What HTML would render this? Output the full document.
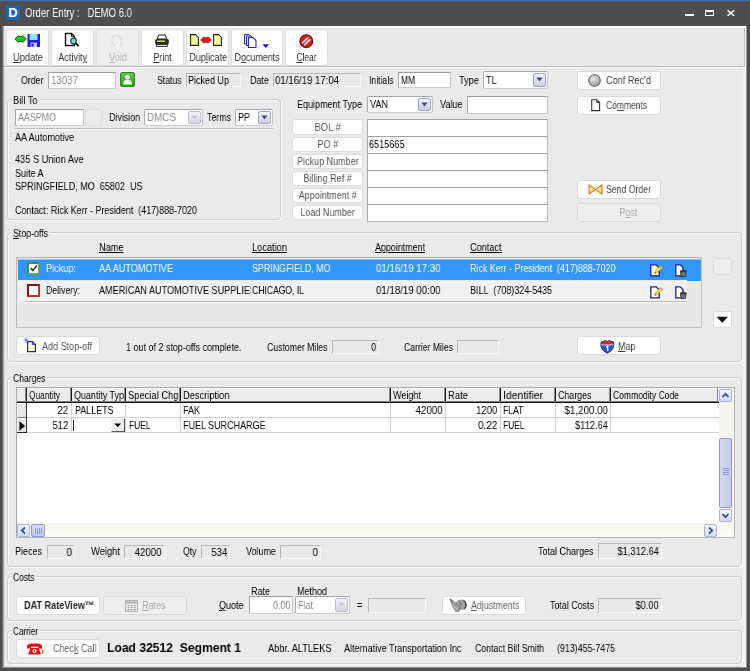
<!DOCTYPE html>
<html><head><meta charset="utf-8"><title>Order Entry : DEMO 6.0</title>
<style>
*{box-sizing:border-box;margin:0;padding:0}
html,body{width:750px;height:671px;overflow:hidden;background:#4e4e4e}
body{font-family:"Liberation Sans",sans-serif;font-size:11px;color:#000;position:relative}
.a{position:absolute}
.t{position:absolute;white-space:pre;line-height:14px;height:14px;will-change:transform}
u{text-decoration:underline;text-underline-offset:1px;text-decoration-thickness:1px}
</style></head><body>
<div class="a" style="left:0px;top:0px;width:750px;height:1px;background:#3d6cb3"></div>
<div class="a" style="left:0px;top:1px;width:750px;height:1px;background:#4a5568"></div>
<div class="a" style="left:6px;top:6px;width:14px;height:14px;background:#1a66b8;color:#fff;font-weight:bold;font-size:13px;line-height:14px;text-align:center">D</div>
<span class="t" style="top:5.8px;left:25px;transform:scaleX(0.794);transform-origin:0 0;color:#fff;font-size:12px;">Order Entry :&nbsp;&nbsp; DEMO 6.0</span>
<div class="a" style="left:685px;top:14px;width:9px;height:2px;background:#fff"></div>
<div class="a" style="left:705px;top:10px;width:9px;height:6px;border:1px solid #fff;border-top-width:2px"></div>
<svg class="a" style="left:727px;top:10px" width="8" height="6" viewBox="0 0 8 6"><path d="M0.6 0.3L7.2 5.9M7.2 0.3L0.6 5.9" stroke="#fff" stroke-width="1.5"/></svg>
<div class="a" style="left:2px;top:26px;width:744px;height:641px;background:#ebeaeb"></div>
<div class="a" style="left:743px;top:68px;width:3px;height:599px;background:#f1f1f1"></div>
<div class="a" style="left:746px;top:26px;width:1px;height:642px;background:#9c9c9c"></div>
<div class="a" style="left:2px;top:26px;width:1px;height:642px;background:#6e6e6e"></div>
<div class="a" style="left:3px;top:26px;width:1px;height:642px;background:#a9a9a9"></div>
<div class="a" style="left:4px;top:26px;width:1px;height:642px;background:#dcdcdc"></div>
<div class="a" style="left:4px;top:26px;width:742px;height:2px;background:#fafafa"></div>
<div class="a" style="left:4px;top:28px;width:741px;height:39px;background:#e9e9e9;border-bottom:1px solid #b9b9b9;border-right:1px solid #c0c0c0"></div>
<div class="a" style="left:4px;top:67px;width:742px;height:1px;background:#fbfbfb"></div>
<div class="a" style="left:745px;top:26px;width:1px;height:42px;background:#f6f6f6"></div>
<div class="a" style="left:6px;top:29px;width:43px;height:37px;background:#fefefe;border:1px solid #dedede;border-radius:3px"></div>
<span class="t" style="top:49.5px;left:9.76px;width:35.98px;text-align:center;transform:scaleX(0.845);transform-origin:50% 0;color:#333;"><u>U</u>pdate</span>
<div class="a" style="left:51px;top:29px;width:43px;height:37px;background:#fefefe;border:1px solid #dedede;border-radius:3px"></div>
<span class="t" style="top:49.5px;left:55.08px;width:35.34px;text-align:center;transform:scaleX(0.832);transform-origin:50% 0;color:#333;">Activit<u>y</u></span>
<div class="a" style="left:96px;top:29px;width:43px;height:37px;background:#eeeeee;border:1px solid #e0e0e0;border-radius:3px"></div>
<span class="t" style="top:49.5px;left:106.79px;width:21.92px;text-align:center;transform:scaleX(0.84);transform-origin:50% 0;color:#b4b4b4;"><u>V</u>oid</span>
<div class="a" style="left:141px;top:29px;width:43px;height:37px;background:#fefefe;border:1px solid #dedede;border-radius:3px"></div>
<span class="t" style="top:49.5px;left:151.19px;width:23.12px;text-align:center;transform:scaleX(0.796);transform-origin:50% 0;color:#333;"><u>P</u>rint</span>
<div class="a" style="left:186px;top:29px;width:43px;height:37px;background:#fefefe;border:1px solid #dedede;border-radius:3px"></div>
<span class="t" style="top:49.5px;left:184.57px;width:46.36px;text-align:center;transform:scaleX(0.829);transform-origin:50% 0;color:#333;">Dup<u>l</u>icate</span>
<div class="a" style="left:231px;top:29px;width:52px;height:37px;background:#fefefe;border:1px solid #dedede;border-radius:3px"></div>
<span class="t" style="top:49.5px;left:229.18px;width:56.14px;text-align:center;transform:scaleX(0.809);transform-origin:50% 0;color:#333;">D<u>o</u>cuments</span>
<div class="a" style="left:285px;top:29px;width:43px;height:37px;background:#fefefe;border:1px solid #dedede;border-radius:3px"></div>
<span class="t" style="top:49.5px;left:293.35px;width:26.8px;text-align:center;transform:scaleX(0.761);transform-origin:50% 0;color:#333;"><u>C</u>lear</span>
<svg class="a" style="left:14px;top:33px" width="27" height="15" viewBox="0 0 27 15"><path d="M0.8 6 L4.4 2.6 L5.2 3.6 L8 3.6 L8.8 2.6 L12.4 6 L8.8 9.4 L8 8.4 L5.2 8.4 L4.4 9.4 Z" fill="#1fc41f" stroke="#0b5e0b" stroke-width="0.9" stroke-linejoin="round"/>
<rect x="13.5" y="1" width="12.5" height="13" fill="#1c1ce6"/><rect x="15.5" y="1" width="8" height="6" fill="#8fe0ee"/><rect x="16.5" y="9.5" width="6.5" height="4.5" fill="#c9c9d8"/><rect x="17.5" y="10.5" width="2" height="3" fill="#1c1ce6"/></svg>
<svg class="a" style="left:64px;top:32px" width="17" height="16" viewBox="0 0 17 16"><path d="M1.5 1.5 H7.5 L10.5 4.5 V13.5 H1.5 Z" fill="#fff" stroke="#111" stroke-width="1.4"/><path d="M7.5 1.5 V4.5 H10.5" fill="none" stroke="#111" stroke-width="1"/>
<circle cx="9.5" cy="9" r="2.8" fill="#8fd6d6" stroke="#234" stroke-width="1.2"/><path d="M11.6 11.2 L14.6 14.2" stroke="#111" stroke-width="1.8"/></svg>
<svg class="a" style="left:110px;top:34px" width="16" height="14" viewBox="0 0 16 14"><path d="M4 2 C1 4 1 10 5 12 M9 2 C12 3 13 9 10 12 M6 1.5 L8 1.5" fill="none" stroke="#d2d2d2" stroke-width="1.2" stroke-dasharray="2 1.2"/></svg>
<svg class="a" style="left:154px;top:34px" width="16" height="14" viewBox="0 0 16 14"><path d="M4.5 1 H11.5 L12.5 5 H3.5 Z" fill="#fff" stroke="#222" stroke-width="1"/><rect x="1.2" y="5" width="13.6" height="5.5" rx="1.5" fill="#2a2a2a"/><rect x="3" y="6.5" width="8" height="1.4" fill="#e8e860"/><rect x="2.5" y="10.5" width="11" height="2" fill="#d8d8d8" stroke="#222" stroke-width="0.8"/></svg>
<svg class="a" style="left:190px;top:34px" width="34" height="13" viewBox="0 0 34 13"><path d="M0.6 0.6 H5.6 L8.4 3.4 V11.4 H0.6 Z" fill="#ffff9a" stroke="#222" stroke-width="1.1"/><g transform="translate(23,0)"><path d="M0.6 0.6 H5.6 L8.4 3.4 V11.4 H0.6 Z" fill="#ffff9a" stroke="#222" stroke-width="1.1"/></g><path d="M10.6 6 L14 2.8 L14.8 3.8 L17.2 3.8 L18 2.8 L21.4 6 L18 9.2 L17.2 8.2 L14.8 8.2 L14 9.2 Z" fill="#e31616" stroke="#9a0808" stroke-width="0.7" stroke-linejoin="round"/></svg>
<svg class="a" style="left:243px;top:33px" width="27" height="16" viewBox="0 0 27 16"><path d="M1.5 1.5 H6 L8.5 4 V11 H1.5 Z" fill="#dfe3ff" stroke="#2a2ab8" stroke-width="1"/><path d="M3.5 3 H8 L10.5 5.5 V12.5 H3.5 Z" fill="#dfe3ff" stroke="#2a2ab8" stroke-width="1"/><path d="M5.5 4.5 H10 L13 7.5 V14.5 H5.5 Z" fill="#fff" stroke="#2a2ab8" stroke-width="1.1"/>
<path d="M19.5 11.2 H26 L22.75 15 Z" fill="#1c1ccc"/></svg>
<svg class="a" style="left:299px;top:34px" width="15" height="15" viewBox="0 0 15 15"><circle cx="7.3" cy="7.2" r="6.4" fill="#e01818" stroke="#6e0a0a" stroke-width="1.1"/><path d="M3.2 9 L9.4 3.2 M5.2 11.2 L11.4 5.4" stroke="#f4f4f4" stroke-width="1.5" fill="none"/><path d="M4.2 10.1 L10.4 4.3" stroke="#b0b0b0" stroke-width="0.7"/></svg>
<span class="t" style="top:72.5px;left:21px;transform:scaleX(0.8);transform-origin:0 0;">Order</span>
<div class="a" style="left:48px;top:72px;width:68px;height:17px;background:#fff;border:1px solid #b2b2b2;border-top-color:#9c9c9c;border-left-color:#a6a6a6;border-bottom-color:#cdcdcd;border-right-color:#c6c6c6"></div>
<span class="t" style="top:72.5px;left:51px;transform:scaleX(0.883);transform-origin:0 0;color:#8a8a8a;">13037</span>
<div class="a" style="left:120px;top:72px;width:15px;height:15px;border:1px solid #2a8420;border-radius:2px;background:linear-gradient(#66c652,#2f9a22);box-shadow:0 0 0 1px #f4f4f4"></div>
<svg class="a" style="left:122px;top:74px" width="11" height="11" viewBox="0 0 11 11"><circle cx="5.5" cy="3.2" r="2.3" fill="#f4fff0"/><path d="M1.2 10.5 C1.2 6.5 3 5.8 5.5 5.8 C8 5.8 9.8 6.5 9.8 10.5 Z" fill="#f4fff0"/></svg>
<span class="t" style="top:72.5px;left:157px;transform:scaleX(0.786);transform-origin:0 0;">Status</span>
<div class="a" style="left:186px;top:73px;width:55px;height:14px;background:#e9e9e9;border:1px solid #b9b9b9;border-right-color:#f8f8f8;border-bottom-color:#f8f8f8"></div>
<span class="t" style="top:72.5px;left:188px;transform:scaleX(0.818);transform-origin:0 0;">Picked Up</span>
<span class="t" style="top:72.5px;left:249.5px;transform:scaleX(0.817);transform-origin:0 0;">Date</span>
<div class="a" style="left:273px;top:73px;width:88px;height:14px;background:#e9e9e9;border:1px solid #b9b9b9;border-right-color:#f8f8f8;border-bottom-color:#f8f8f8"></div>
<span class="t" style="top:72.5px;left:275px;transform:scaleX(0.872);transform-origin:0 0;">01/16/19 17:04</span>
<span class="t" style="top:72.5px;left:368.5px;transform:scaleX(0.786);transform-origin:0 0;">Initials</span>
<div class="a" style="left:398px;top:72px;width:53px;height:16px;background:#fff;border:1px solid #b2b2b2;border-top-color:#9c9c9c;border-left-color:#a6a6a6;border-bottom-color:#cdcdcd;border-right-color:#c6c6c6"></div>
<span class="t" style="top:72.5px;left:401px;transform:scaleX(0.764);transform-origin:0 0;">MM</span>
<span class="t" style="top:72.5px;left:458.5px;transform:scaleX(0.838);transform-origin:0 0;">Type</span>
<div class="a" style="left:483px;top:71px;width:65px;height:18px;background:#fff;border:1px solid #b6b6b6;border-top-color:#a4a4a4;border-left-color:#acacac;border-bottom-color:#cdcdcd;border-right-color:#c6c6c6;border-radius:2px"></div>
<div class="a" style="left:533px;top:73px;width:13px;height:14px;border:1px solid #a2a4c0;border-radius:2px;background:linear-gradient(#f3f3f9,#cbcce2)"></div>
<svg class="a" style="left:536px;top:77px" width="7" height="5" viewBox="0 0 7 5"><path d="M0.3 0.6 H6.7 L3.5 4.6 Z" fill="#43468c"/></svg>
<span class="t" style="top:72.5px;left:486px;transform:scaleX(0.818);transform-origin:0 0;">TL</span>
<div class="a" style="left:577px;top:71px;width:84px;height:19px;background:#fefefe;border:1px solid #dadada;border-radius:3px"></div>
<svg class="a" style="left:588px;top:74px" width="13" height="13" viewBox="0 0 13 13"><defs><radialGradient id="cg" cx="0.4" cy="0.35" r="0.7"><stop offset="0" stop-color="#e4e4e4"/><stop offset="1" stop-color="#9a9a9a"/></radialGradient></defs><circle cx="6.5" cy="6.5" r="5.8" fill="url(#cg)" stroke="#555" stroke-width="1"/></svg>
<span class="t" style="top:72.5px;left:605.5px;transform:scaleX(0.832);transform-origin:0 0;color:#444;">Conf Rec'd</span>
<div class="a" style="left:7px;top:99px;width:274px;height:121px;border:1px solid #d0d0d0;border-radius:4px;box-shadow:inset 1px 1px 0 #fafafa, 1px 1px 0 #fafafa"></div>
<div class="a" style="left:12px;top:93px;width:27.5px;height:14px;background:#ebeaeb"></div>
<span class="t" style="top:92.5px;left:13px;transform:scaleX(0.84);transform-origin:0 0;">Bill To</span>
<div class="a" style="left:15px;top:109px;width:69px;height:17px;background:#fff;border:1px solid #b2b2b2;border-top-color:#9c9c9c;border-left-color:#a6a6a6;border-bottom-color:#cdcdcd;border-right-color:#c6c6c6"></div>
<span class="t" style="top:110.0px;left:18px;transform:scaleX(0.807);transform-origin:0 0;color:#8a8a8a;">AASPMO</span>
<div class="a" style="left:85px;top:109px;width:17px;height:17px;background:#ececec;border:1px solid #dedede;border-radius:2px"></div>
<span class="t" style="top:110.0px;left:108.5px;transform:scaleX(0.805);transform-origin:0 0;">Division</span>
<div class="a" style="left:144px;top:109px;width:59px;height:17px;background:#fff;border:1px solid #b6b6b6;border-top-color:#a4a4a4;border-left-color:#acacac;border-bottom-color:#cdcdcd;border-right-color:#c6c6c6;border-radius:2px"></div>
<div class="a" style="left:188px;top:111px;width:13px;height:13px;border:1px solid #b9bccb;border-radius:2px;background:linear-gradient(#f2f3f8,#d4d6e2)"></div>
<svg class="a" style="left:191px;top:115px" width="7" height="5" viewBox="0 0 7 5"><path d="M0.5 0.8 H6.5 L3.5 4.4 Z" fill="#c2c4d4"/></svg>
<span class="t" style="top:110.0px;left:147px;transform:scaleX(0.895);transform-origin:0 0;color:#8a8a8a;">DMCS</span>
<span class="t" style="top:110.0px;left:207px;transform:scaleX(0.801);transform-origin:0 0;">Terms</span>
<div class="a" style="left:235px;top:109px;width:38px;height:17px;background:#fff;border:1px solid #b6b6b6;border-top-color:#a4a4a4;border-left-color:#acacac;border-bottom-color:#cdcdcd;border-right-color:#c6c6c6;border-radius:2px"></div>
<div class="a" style="left:258px;top:111px;width:13px;height:13px;border:1px solid #a2a4c0;border-radius:2px;background:linear-gradient(#f3f3f9,#cbcce2)"></div>
<svg class="a" style="left:261px;top:115px" width="7" height="5" viewBox="0 0 7 5"><path d="M0.3 0.6 H6.7 L3.5 4.6 Z" fill="#43468c"/></svg>
<span class="t" style="top:110.0px;left:238px;transform:scaleX(0.817);transform-origin:0 0;">PP</span>
<div class="a" style="left:15px;top:128px;width:258px;height:1px;background:#bdbdbd"></div>
<div class="a" style="left:15px;top:129px;width:258px;height:1px;background:#fbfbfb"></div>
<span class="t" style="top:130.0px;left:15px;transform:scaleX(0.825);transform-origin:0 0;">AA Automotive</span>
<span class="t" style="top:152.0px;left:15px;transform:scaleX(0.838);transform-origin:0 0;">435 S Union Ave</span>
<span class="t" style="top:165.5px;left:15px;transform:scaleX(0.818);transform-origin:0 0;">Suite A</span>
<span class="t" style="top:179.0px;left:15px;transform:scaleX(0.821);transform-origin:0 0;">SPRINGFIELD, MO&nbsp; 65802&nbsp; US</span>
<span class="t" style="top:203.0px;left:15px;transform:scaleX(0.813);transform-origin:0 0;">Contact: Rick Kerr - President&nbsp; (417)888-7020</span>
<span class="t" style="top:97.0px;left:296.5px;transform:scaleX(0.82);transform-origin:0 0;">Equipment Type</span>
<div class="a" style="left:367px;top:96px;width:66px;height:17px;background:#fff;border:1px solid #b6b6b6;border-top-color:#a4a4a4;border-left-color:#acacac;border-bottom-color:#cdcdcd;border-right-color:#c6c6c6;border-radius:2px"></div>
<div class="a" style="left:418px;top:98px;width:13px;height:13px;border:1px solid #a2a4c0;border-radius:2px;background:linear-gradient(#f3f3f9,#cbcce2)"></div>
<svg class="a" style="left:421px;top:102px" width="7" height="5" viewBox="0 0 7 5"><path d="M0.3 0.6 H6.7 L3.5 4.6 Z" fill="#43468c"/></svg>
<span class="t" style="top:97.0px;left:370px;transform:scaleX(0.825);transform-origin:0 0;">VAN</span>
<span class="t" style="top:97.0px;left:439.5px;transform:scaleX(0.823);transform-origin:0 0;">Value</span>
<div class="a" style="left:467px;top:96px;width:81px;height:18px;background:#fff;border:1px solid #b2b2b2;border-top-color:#9c9c9c;border-left-color:#a6a6a6;border-bottom-color:#cdcdcd;border-right-color:#c6c6c6"></div>
<div class="a" style="left:577px;top:96px;width:84px;height:19px;background:#fefefe;border:1px solid #dadada;border-radius:3px"></div>
<svg class="a" style="left:591px;top:99px" width="10" height="13" viewBox="0 0 10 13"><path d="M0.7 0.7 H5.8 L8.6 3.5 V11.6 H0.7 Z" fill="#fff" stroke="#333" stroke-width="1.1"/><path d="M5.8 0.7 V3.5 H8.6" fill="none" stroke="#333" stroke-width="1"/></svg>
<span class="t" style="top:97.5px;left:606px;transform:scaleX(0.771);transform-origin:0 0;color:#444;">Co<u>m</u>ments</span>
<div class="a" style="left:292px;top:119px;width:71px;height:16px;background:#fefefe;border:1px solid #dcdcdc;border-radius:3px"></div>
<span class="t" style="top:119.5px;left:312.11px;width:31.28px;text-align:center;transform:scaleX(0.845);transform-origin:50% 0;color:#555;">BOL #</span>
<div class="a" style="left:367px;top:119px;width:181px;height:18px;background:#fff;border:1px solid #b8b8b8;border-top-color:#a2a2a2;border-left-color:#a8a8a8"></div>
<div class="a" style="left:292px;top:137px;width:71px;height:15px;background:#fefefe;border:1px solid #dcdcdc;border-radius:3px"></div>
<span class="t" style="top:136.5px;left:314.96px;width:25.58px;text-align:center;transform:scaleX(0.817);transform-origin:50% 0;color:#555;">PO #</span>
<div class="a" style="left:367px;top:136px;width:181px;height:18px;background:#fff;border:1px solid #b8b8b8;border-top-color:#a2a2a2;border-left-color:#a8a8a8"></div>
<div class="a" style="left:292px;top:154px;width:71px;height:15px;background:#fefefe;border:1px solid #dcdcdc;border-radius:3px"></div>
<span class="t" style="top:153.5px;left:289.9px;width:75.7px;text-align:center;transform:scaleX(0.818);transform-origin:50% 0;color:#555;">Pickup Number</span>
<div class="a" style="left:367px;top:153px;width:181px;height:18px;background:#fff;border:1px solid #b8b8b8;border-top-color:#a2a2a2;border-left-color:#a8a8a8"></div>
<div class="a" style="left:292px;top:171px;width:71px;height:15px;background:#fefefe;border:1px solid #dcdcdc;border-radius:3px"></div>
<span class="t" style="top:170.5px;left:298.15px;width:59.2px;text-align:center;transform:scaleX(0.826);transform-origin:50% 0;color:#555;">Billing Ref #</span>
<div class="a" style="left:367px;top:170px;width:181px;height:18px;background:#fff;border:1px solid #b8b8b8;border-top-color:#a2a2a2;border-left-color:#a8a8a8"></div>
<div class="a" style="left:292px;top:188px;width:71px;height:15px;background:#fefefe;border:1px solid #dcdcdc;border-radius:3px"></div>
<span class="t" style="top:187.5px;left:292.03px;width:71.44px;text-align:center;transform:scaleX(0.818);transform-origin:50% 0;color:#555;">Appointment #</span>
<div class="a" style="left:367px;top:187px;width:181px;height:18px;background:#fff;border:1px solid #b8b8b8;border-top-color:#a2a2a2;border-left-color:#a8a8a8"></div>
<div class="a" style="left:292px;top:205px;width:71px;height:15px;background:#fefefe;border:1px solid #dcdcdc;border-radius:3px"></div>
<span class="t" style="top:204.5px;left:294.17px;width:67.16px;text-align:center;transform:scaleX(0.818);transform-origin:50% 0;color:#555;">Load Number</span>
<div class="a" style="left:367px;top:204px;width:181px;height:18px;background:#fff;border:1px solid #b8b8b8;border-top-color:#a2a2a2;border-left-color:#a8a8a8"></div>
<span class="t" style="top:136.5px;left:369.3px;transform:scaleX(0.829);transform-origin:0 0;">6515665</span>
<div class="a" style="left:577px;top:180px;width:84px;height:19px;background:#fefefe;border:1px solid #dadada;border-radius:3px"></div>
<svg class="a" style="left:588px;top:183px" width="15" height="13" viewBox="0 0 15 13"><path d="M1 2 L7.5 6.5 L14 2 V11 L7.5 6.5 L1 11 Z" fill="#ffe2b0" stroke="#e8861a" stroke-width="1.3" stroke-linejoin="round"/></svg>
<span class="t" style="top:181.5px;left:605.5px;transform:scaleX(0.791);transform-origin:0 0;color:#444;">Send Order</span>
<div class="a" style="left:577px;top:203px;width:84px;height:19px;background:#eeeeee;border:1px solid #dadada;border-radius:3px"></div>
<span class="t" style="top:204.5px;left:616.69px;width:22.52px;text-align:center;transform:scaleX(0.818);transform-origin:50% 0;color:#a8a8a8;">P<u>o</u>st</span>
<div class="a" style="left:7px;top:232px;width:735px;height:130px;border:1px solid #d0d0d0;border-radius:4px;box-shadow:inset 1px 1px 0 #fafafa, 1px 1px 0 #fafafa"></div>
<div class="a" style="left:12px;top:226px;width:38px;height:14px;background:#ebeaeb"></div>
<span class="t" style="top:225.5px;left:13px;transform:scaleX(0.799);transform-origin:0 0;"><u>S</u>top-offs</span>
<span class="t" style="top:240.0px;left:98.5px;transform:scaleX(0.835);transform-origin:0 0;"><u>Name</u></span>
<span class="t" style="top:240.0px;left:251.5px;transform:scaleX(0.841);transform-origin:0 0;"><u>Location</u></span>
<span class="t" style="top:240.0px;left:375px;transform:scaleX(0.81);transform-origin:0 0;"><u>Appointment</u></span>
<span class="t" style="top:240.0px;left:470px;transform:scaleX(0.831);transform-origin:0 0;"><u>Contact</u></span>
<div class="a" style="left:16px;top:257px;width:686px;height:71px;background:#e9e8e9;border:1px solid #c4c4c4;border-top-color:#b4b4b4;border-left-color:#b8b8b8"></div>
<div class="a" style="left:18px;top:259px;width:683px;height:1px;background:#8fc4fa"></div>
<div class="a" style="left:18px;top:260px;width:683px;height:20px;background:#3396fb"></div>
<div class="a" style="left:687px;top:280px;width:14px;height:1px;background:#3396fb"></div>
<div class="a" style="left:18px;top:281px;width:669px;height:20px;background:#f1f1f1"></div>
<div class="a" style="left:25px;top:301px;width:662px;height:1px;background:#bcbcbc"></div>
<div class="a" style="left:25px;top:302px;width:662px;height:1px;background:#fafafa"></div>
<div class="a" style="left:27px;top:262px;width:13px;height:13px;background:#fff;border:2px solid #58a862;border-top-color:#3f8f4a;border-left-color:#3f8f4a"></div>
<svg class="a" style="left:29px;top:264px" width="10" height="9" viewBox="0 0 10 9"><path d="M1.6 4 L3.8 6.6 L8 1.6" fill="none" stroke="#333" stroke-width="1.6"/></svg>
<div class="a" style="left:27px;top:284px;width:13px;height:13px;background:#fff;border:2px solid #c03030;border-top-color:#8a1414;border-left-color:#8a1414"></div>
<span class="t" style="top:261.0px;left:45.5px;transform:scaleX(0.832);transform-origin:0 0;color:#fff;">Pickup:</span>
<span class="t" style="top:261.0px;left:98.5px;transform:scaleX(0.831);transform-origin:0 0;color:#fff;">AA AUTOMOTIVE</span>
<span class="t" style="top:261.0px;left:252px;transform:scaleX(0.808);transform-origin:0 0;color:#fff;">SPRINGFIELD, MO</span>
<span class="t" style="top:261.0px;left:375.5px;transform:scaleX(0.879);transform-origin:0 0;color:#fff;">01/16/19 17:30</span>
<span class="t" style="top:261.0px;left:470px;transform:scaleX(0.809);transform-origin:0 0;color:#fff;">Rick Kerr - President&nbsp; (417)888-7020</span>
<span class="t" style="top:283.0px;left:45.5px;transform:scaleX(0.794);transform-origin:0 0;">Delivery:</span>
<div class="a" style="left:98px;top:283px;width:153px;height:15px;overflow:hidden">
<span class="t" style="top:0.0px;left:0.5px;transform:scaleX(0.827);transform-origin:0 0;">AMERICAN AUTOMOTIVE SUPPLIES</span>
</div>
<span class="t" style="top:283.0px;left:252px;transform:scaleX(0.78);transform-origin:0 0;">CHICAGO, IL</span>
<span class="t" style="top:283.0px;left:375.5px;transform:scaleX(0.879);transform-origin:0 0;">01/18/19 00:00</span>
<span class="t" style="top:283.0px;left:470px;transform:scaleX(0.813);transform-origin:0 0;">BILL&nbsp; (708)324-5435</span>
<svg class="a" style="left:650px;top:264px" width="14" height="13" viewBox="0 0 14 13"><path d="M0.8 0.8 H6.2 L9.2 3.8 V11.8 H0.8 Z" fill="#ffffd2" stroke="#1c1ca8" stroke-width="1.3"/>
<path d="M4.5 9.5 L5.2 7 L10.8 1.6 L12.6 3.4 L7 8.8 Z" fill="#ffd640" stroke="#c08a10" stroke-width="0.5"/><path d="M10.2 2.2 L10.8 1.6 L12.6 3.4 L12 4 Z" fill="#f050b0"/><path d="M4.5 9.5 L5 8 L6 9 Z" fill="#333"/></svg>
<svg class="a" style="left:675px;top:264px" width="13" height="14" viewBox="0 0 13 14"><path d="M0.8 0.8 H5.2 L8 3.6 V11.8 H0.8 Z" fill="#ffffe0" stroke="#1c1ca8" stroke-width="1.3"/>
<path d="M5.4 7.6 H11.2 L10.6 12.6 H6 Z" fill="#5a5a5a" stroke="#2a2a2a" stroke-width="0.7"/><rect x="5" y="6.4" width="6.6" height="1.4" fill="#333"/><rect x="7.2" y="5.5" width="2.2" height="1.1" fill="#333"/><path d="M7.2 8.6 V11.8 M8.3 8.6 V11.8 M9.4 8.6 V11.8" stroke="#999" stroke-width="0.5"/></svg>
<svg class="a" style="left:650px;top:286px" width="14" height="13" viewBox="0 0 14 13"><path d="M0.8 0.8 H6.2 L9.2 3.8 V11.8 H0.8 Z" fill="#ffffd2" stroke="#1c1ca8" stroke-width="1.3"/>
<path d="M4.5 9.5 L5.2 7 L10.8 1.6 L12.6 3.4 L7 8.8 Z" fill="#ffd640" stroke="#c08a10" stroke-width="0.5"/><path d="M10.2 2.2 L10.8 1.6 L12.6 3.4 L12 4 Z" fill="#f050b0"/><path d="M4.5 9.5 L5 8 L6 9 Z" fill="#333"/></svg>
<svg class="a" style="left:675px;top:286px" width="13" height="14" viewBox="0 0 13 14"><path d="M0.8 0.8 H5.2 L8 3.6 V11.8 H0.8 Z" fill="#ffffe0" stroke="#1c1ca8" stroke-width="1.3"/>
<path d="M5.4 7.6 H11.2 L10.6 12.6 H6 Z" fill="#5a5a5a" stroke="#2a2a2a" stroke-width="0.7"/><rect x="5" y="6.4" width="6.6" height="1.4" fill="#333"/><rect x="7.2" y="5.5" width="2.2" height="1.1" fill="#333"/><path d="M7.2 8.6 V11.8 M8.3 8.6 V11.8 M9.4 8.6 V11.8" stroke="#999" stroke-width="0.5"/></svg>
<div class="a" style="left:713px;top:258px;width:19px;height:17px;background:#eeeeee;border:1px solid #dcdcdc;border-radius:3px"></div>
<div class="a" style="left:713px;top:311px;width:19px;height:17px;background:#fefefe;border:1px solid #dadada;border-radius:2px"></div>
<svg class="a" style="left:716px;top:316px" width="13" height="8" viewBox="0 0 13 8"><path d="M0.6 0.8 H12 L6.3 6.8 Z" fill="#111"/></svg>
<div class="a" style="left:16px;top:336px;width:84px;height:19px;background:#fefefe;border:1px solid #dadada;border-radius:3px"></div>
<svg class="a" style="left:23px;top:337px" width="15" height="16" viewBox="0 0 15 16"><path d="M4.6 4.6 H9.4 L12.4 7.6 V14.6 H4.6 Z" fill="#ffffc0" stroke="#2222a8" stroke-width="1.2"/><path d="M9.4 4.6 V7.6 H12.4" fill="none" stroke="#2222a8" stroke-width="0.9"/><path d="M1.2 1.2 L5.2 5.2 M5.4 1.4 L1.4 5.2 M3.2 0.5 V5.8 M0.6 3.2 H5.8" stroke="#5a5ac8" stroke-width="0.6"/></svg>
<span class="t" style="top:338.5px;left:41.8px;transform:scaleX(0.82);transform-origin:0 0;color:#5a5a5a;">Add Stop-off</span>
<span class="t" style="top:339.5px;left:126px;transform:scaleX(0.815);transform-origin:0 0;">1 out of 2 stop-offs complete.</span>
<span class="t" style="top:339.5px;left:267px;transform:scaleX(0.792);transform-origin:0 0;">Customer Miles</span>
<div class="a" style="left:332px;top:340px;width:47px;height:14px;background:#e9e9e9;border:1px solid #b9b9b9;border-right-color:#f8f8f8;border-bottom-color:#f8f8f8"></div>
<span class="t" style="top:339.5px;right:374px;transform:scaleX(0.816);transform-origin:100% 0;">0</span>
<span class="t" style="top:339.5px;left:404px;transform:scaleX(0.786);transform-origin:0 0;">Carrier Miles</span>
<div class="a" style="left:457px;top:340px;width:42px;height:14px;background:#e9e9e9;border:1px solid #b9b9b9;border-right-color:#f8f8f8;border-bottom-color:#f8f8f8"></div>
<div class="a" style="left:577px;top:336px;width:84px;height:19px;background:#fefefe;border:1px solid #dadada;border-radius:3px"></div>
<svg class="a" style="left:600px;top:339px" width="15" height="15" viewBox="0 0 15 15"><path d="M1.4 2.6 C2.6 3 3.8 2.6 4.6 1.4 C5.4 2.4 9.2 2.4 10 1.4 C10.8 2.6 12 3 13.2 2.6 C14.6 6.4 13.6 11.4 7.3 14.2 C1 11.4 0 6.4 1.4 2.6 Z" fill="#2b55cc" stroke="#16225e" stroke-width="0.9"/><path d="M1.6 2.8 C2.6 3 3.8 2.6 4.6 1.6 C5.4 2.5 9.2 2.5 10 1.6 C10.8 2.6 12 3 13 2.8 C13.4 3.8 13.6 4.8 13.6 5.6 H1 C1 4.8 1.2 3.8 1.6 2.8 Z" fill="#dc2222"/><path d="M1 5.9 H13.6" stroke="#f4f4f4" stroke-width="0.8"/><path d="M6.2 8.2 L7.7 7.2 V12" stroke="#fff" stroke-width="1.4" fill="none"/></svg>
<span class="t" style="top:338.5px;left:618.3px;transform:scaleX(0.818);transform-origin:0 0;color:#444;"><u>M</u>ap</span>
<div class="a" style="left:7px;top:377px;width:735px;height:190px;border:1px solid #d0d0d0;border-radius:4px;box-shadow:inset 1px 1px 0 #fafafa, 1px 1px 0 #fafafa"></div>
<div class="a" style="left:12px;top:371px;width:35.5px;height:14px;background:#ebeaeb"></div>
<span class="t" style="top:370.5px;left:13px;transform:scaleX(0.782);transform-origin:0 0;">Charges</span>
<div class="a" style="left:16px;top:387px;width:719px;height:151px;background:#fff;border:1px solid #b6b6b6;border-top-color:#a8a8a8;border-left-color:#a8a8a8"></div>
<div class="a" style="left:17px;top:388px;width:702px;height:14px;background:#ececec"></div>
<div class="a" style="left:17px;top:388px;width:702px;height:1px;background:#fbfbfb"></div>
<div class="a" style="left:25px;top:388px;width:1px;height:14px;background:#8a8a8a"></div>
<div class="a" style="left:26px;top:388px;width:1px;height:14px;background:#1a1a1a"></div>
<div class="a" style="left:70px;top:388px;width:1px;height:14px;background:#8a8a8a"></div>
<div class="a" style="left:71px;top:388px;width:1px;height:14px;background:#1a1a1a"></div>
<span class="t" style="top:388.0px;left:29px;transform:scaleX(0.757);transform-origin:0 0;">Quantity</span>
<div class="a" style="left:124px;top:388px;width:1px;height:14px;background:#8a8a8a"></div>
<div class="a" style="left:125px;top:388px;width:1px;height:14px;background:#1a1a1a"></div>
<span class="t" style="top:388.0px;left:74px;transform:scaleX(0.812);transform-origin:0 0;">Quantity Typ</span>
<div class="a" style="left:179px;top:388px;width:1px;height:14px;background:#8a8a8a"></div>
<div class="a" style="left:180px;top:388px;width:1px;height:14px;background:#1a1a1a"></div>
<span class="t" style="top:388.0px;left:128px;transform:scaleX(0.851);transform-origin:0 0;">Special Chg</span>
<div class="a" style="left:389px;top:388px;width:1px;height:14px;background:#8a8a8a"></div>
<div class="a" style="left:390px;top:388px;width:1px;height:14px;background:#1a1a1a"></div>
<span class="t" style="top:388.0px;left:183px;transform:scaleX(0.845);transform-origin:0 0;">Description</span>
<div class="a" style="left:444px;top:388px;width:1px;height:14px;background:#8a8a8a"></div>
<div class="a" style="left:445px;top:388px;width:1px;height:14px;background:#1a1a1a"></div>
<span class="t" style="top:388.0px;left:393px;transform:scaleX(0.822);transform-origin:0 0;">Weight</span>
<div class="a" style="left:499px;top:388px;width:1px;height:14px;background:#8a8a8a"></div>
<div class="a" style="left:500px;top:388px;width:1px;height:14px;background:#1a1a1a"></div>
<span class="t" style="top:388.0px;left:448px;transform:scaleX(0.86);transform-origin:0 0;">Rate</span>
<div class="a" style="left:554px;top:388px;width:1px;height:14px;background:#8a8a8a"></div>
<div class="a" style="left:555px;top:388px;width:1px;height:14px;background:#1a1a1a"></div>
<span class="t" style="top:388.0px;left:503px;transform:scaleX(0.948);transform-origin:0 0;">Identifier</span>
<div class="a" style="left:609px;top:388px;width:1px;height:14px;background:#8a8a8a"></div>
<div class="a" style="left:610px;top:388px;width:1px;height:14px;background:#1a1a1a"></div>
<span class="t" style="top:388.0px;left:558px;transform:scaleX(0.806);transform-origin:0 0;">Charges</span>
<div class="a" style="left:717px;top:388px;width:1px;height:14px;background:#8a8a8a"></div>
<span class="t" style="top:388.0px;left:613px;transform:scaleX(0.777);transform-origin:0 0;">Commodity Code</span>
<div class="a" style="left:17px;top:401px;width:702px;height:1px;background:#7a7a7a"></div>
<div class="a" style="left:17px;top:402px;width:702px;height:1px;background:#111"></div>
<div class="a" style="left:17px;top:403px;width:9px;height:15px;background:#e6e6e6;border-top:1px solid #fff;border-left:1px solid #fff;border-bottom:1px solid #7c7c7c"></div>
<div class="a" style="left:26px;top:403px;width:1px;height:15px;background:#333"></div>
<div class="a" style="left:27px;top:417px;width:692px;height:1px;background:#cfcfcf"></div>
<div class="a" style="left:71px;top:403px;width:1px;height:15px;background:#d2d2d2"></div>
<div class="a" style="left:125px;top:403px;width:1px;height:15px;background:#d2d2d2"></div>
<div class="a" style="left:180px;top:403px;width:1px;height:15px;background:#d2d2d2"></div>
<div class="a" style="left:390px;top:403px;width:1px;height:15px;background:#d2d2d2"></div>
<div class="a" style="left:445px;top:403px;width:1px;height:15px;background:#d2d2d2"></div>
<div class="a" style="left:500px;top:403px;width:1px;height:15px;background:#d2d2d2"></div>
<div class="a" style="left:555px;top:403px;width:1px;height:15px;background:#d2d2d2"></div>
<div class="a" style="left:610px;top:403px;width:1px;height:15px;background:#d2d2d2"></div>
<div class="a" style="left:17px;top:418px;width:9px;height:15px;background:#e6e6e6;border-top:1px solid #fff;border-left:1px solid #fff;border-bottom:1px solid #7c7c7c"></div>
<div class="a" style="left:26px;top:418px;width:1px;height:15px;background:#333"></div>
<div class="a" style="left:27px;top:432px;width:692px;height:1px;background:#cfcfcf"></div>
<div class="a" style="left:71px;top:418px;width:1px;height:15px;background:#d2d2d2"></div>
<div class="a" style="left:125px;top:418px;width:1px;height:15px;background:#d2d2d2"></div>
<div class="a" style="left:180px;top:418px;width:1px;height:15px;background:#d2d2d2"></div>
<div class="a" style="left:390px;top:418px;width:1px;height:15px;background:#d2d2d2"></div>
<div class="a" style="left:445px;top:418px;width:1px;height:15px;background:#d2d2d2"></div>
<div class="a" style="left:500px;top:418px;width:1px;height:15px;background:#d2d2d2"></div>
<div class="a" style="left:555px;top:418px;width:1px;height:15px;background:#d2d2d2"></div>
<div class="a" style="left:610px;top:418px;width:1px;height:15px;background:#d2d2d2"></div>
<div class="a" style="left:17px;top:432px;width:10px;height:1px;background:#222"></div>
<svg class="a" style="left:19px;top:421px" width="7" height="10" viewBox="0 0 7 10"><path d="M0.4 0.3 V9.7 L6 5 Z" fill="#000"/></svg>
<span class="t" style="top:403.0px;right:681.5px;transform:scaleX(0.898);transform-origin:100% 0;">22</span>
<span class="t" style="top:403.0px;left:74.5px;transform:scaleX(0.811);transform-origin:0 0;">PALLETS</span>
<span class="t" style="top:403.0px;left:183px;transform:scaleX(0.817);transform-origin:0 0;">FAK</span>
<span class="t" style="top:403.0px;right:307.5px;transform:scaleX(0.883);transform-origin:100% 0;">42000</span>
<span class="t" style="top:403.0px;right:253px;transform:scaleX(0.878);transform-origin:100% 0;">1200</span>
<span class="t" style="top:403.0px;left:503px;transform:scaleX(0.786);transform-origin:0 0;">FLAT</span>
<span class="t" style="top:403.0px;right:142.5px;transform:scaleX(0.889);transform-origin:100% 0;">$1,200.00</span>
<span class="t" style="top:418.0px;right:681.5px;transform:scaleX(0.871);transform-origin:100% 0;">512</span>
<div class="a" style="left:73px;top:420px;width:1px;height:11px;background:#222"></div>
<div class="a" style="left:111px;top:418px;width:14px;height:14px;background:#ececec;border:1px solid #fafafa;border-right-color:#555;border-bottom-color:#555"></div>
<svg class="a" style="left:114px;top:423px" width="8" height="5" viewBox="0 0 8 5"><path d="M0.4 0.5 H7 L3.7 4.2 Z" fill="#000"/></svg>
<span class="t" style="top:418.0px;left:128.5px;transform:scaleX(0.764);transform-origin:0 0;">FUEL</span>
<span class="t" style="top:418.0px;left:183px;transform:scaleX(0.816);transform-origin:0 0;">FUEL SURCHARGE</span>
<span class="t" style="top:418.0px;right:253px;transform:scaleX(0.91);transform-origin:100% 0;">0.22</span>
<span class="t" style="top:418.0px;left:503px;transform:scaleX(0.764);transform-origin:0 0;">FUEL</span>
<span class="t" style="top:418.0px;right:142.5px;transform:scaleX(0.847);transform-origin:100% 0;">$112.64</span>
<div class="a" style="left:719px;top:388px;width:15px;height:135px;background:#f6f6ee"></div>
<div class="a" style="left:17px;top:523px;width:717px;height:14px;background:linear-gradient(#f6f6ee,#fdfdf8)"></div>
<div class="a" style="left:719px;top:389px;width:13px;height:13px;border:1px solid #a9b4dc;border-radius:2px;background:linear-gradient(#f4f6fd,#d3daf2)"></div>
<svg class="a" style="left:720px;top:390px" width="11" height="11" viewBox="0 0 11 11"><path d="M2.5 7 L5.5 3.8 L8.5 7" fill="none" stroke="#2a4fb0" stroke-width="1.8"/></svg>
<div class="a" style="left:719px;top:509px;width:13px;height:13px;border:1px solid #a9b4dc;border-radius:2px;background:linear-gradient(#f4f6fd,#d3daf2)"></div>
<svg class="a" style="left:720px;top:510px" width="11" height="11" viewBox="0 0 11 11"><path d="M2.5 4 L5.5 7.2 L8.5 4" fill="none" stroke="#2a4fb0" stroke-width="1.8"/></svg>
<div class="a" style="left:719px;top:438px;width:13px;height:70px;border:1px solid #8d9ad0;border-radius:2px;background:linear-gradient(90deg,#d4dbf4,#c2caec)"></div>
<div class="a" style="left:723px;top:468px;width:6px;height:1px;background:#8f9bcc"></div>
<div class="a" style="left:723px;top:470px;width:6px;height:1px;background:#8f9bcc"></div>
<div class="a" style="left:723px;top:472px;width:6px;height:1px;background:#8f9bcc"></div>
<div class="a" style="left:723px;top:474px;width:6px;height:1px;background:#8f9bcc"></div>
<div class="a" style="left:17px;top:524px;width:13px;height:13px;border:1px solid #a9b4dc;border-radius:2px;background:linear-gradient(#f4f6fd,#d3daf2)"></div>
<svg class="a" style="left:18px;top:525px" width="11" height="11" viewBox="0 0 11 11"><path d="M7 2.5 L3.8 5.5 L7 8.5" fill="none" stroke="#2a4fb0" stroke-width="1.8"/></svg>
<div class="a" style="left:704px;top:524px;width:13px;height:13px;border:1px solid #a9b4dc;border-radius:2px;background:linear-gradient(#f4f6fd,#d3daf2)"></div>
<svg class="a" style="left:705px;top:525px" width="11" height="11" viewBox="0 0 11 11"><path d="M4 2.5 L7.2 5.5 L4 8.5" fill="none" stroke="#2a4fb0" stroke-width="1.8"/></svg>
<div class="a" style="left:31px;top:524px;width:14px;height:13px;border:1px solid #8d9ad0;border-radius:2px;background:linear-gradient(#d4dbf4,#c2caec)"></div>
<div class="a" style="left:35px;top:528px;width:1px;height:6px;background:#8f9bcc"></div>
<div class="a" style="left:37px;top:528px;width:1px;height:6px;background:#8f9bcc"></div>
<div class="a" style="left:39px;top:528px;width:1px;height:6px;background:#8f9bcc"></div>
<div class="a" style="left:41px;top:528px;width:1px;height:6px;background:#8f9bcc"></div>
<span class="t" style="top:543.5px;left:15px;transform:scaleX(0.817);transform-origin:0 0;">Pieces</span>
<div class="a" style="left:47px;top:545px;width:28px;height:14px;background:#e9e9e9;border:1px solid #b9b9b9;border-right-color:#f8f8f8;border-bottom-color:#f8f8f8"></div>
<span class="t" style="top:544.5px;right:678px;transform:scaleX(0.898);transform-origin:100% 0;">0</span>
<span class="t" style="top:543.5px;left:91px;transform:scaleX(0.852);transform-origin:0 0;">Weight</span>
<div class="a" style="left:124px;top:545px;width:41px;height:14px;background:#e9e9e9;border:1px solid #b9b9b9;border-right-color:#f8f8f8;border-bottom-color:#f8f8f8"></div>
<span class="t" style="top:544.5px;right:588px;transform:scaleX(0.883);transform-origin:100% 0;">42000</span>
<span class="t" style="top:543.5px;left:183px;transform:scaleX(0.788);transform-origin:0 0;">Qty</span>
<div class="a" style="left:201px;top:545px;width:29px;height:14px;background:#e9e9e9;border:1px solid #b9b9b9;border-right-color:#f8f8f8;border-bottom-color:#f8f8f8"></div>
<span class="t" style="top:544.5px;right:523px;transform:scaleX(0.871);transform-origin:100% 0;">534</span>
<span class="t" style="top:543.5px;left:245.5px;transform:scaleX(0.817);transform-origin:0 0;">Volume</span>
<div class="a" style="left:280px;top:545px;width:41px;height:14px;background:#e9e9e9;border:1px solid #b9b9b9;border-right-color:#f8f8f8;border-bottom-color:#f8f8f8"></div>
<span class="t" style="top:544.5px;right:432px;transform:scaleX(0.898);transform-origin:100% 0;">0</span>
<span class="t" style="top:543.5px;left:538px;transform:scaleX(0.818);transform-origin:0 0;">Total Charges</span>
<div class="a" style="left:598px;top:543px;width:64px;height:16px;background:#e9e9e9;border:1px solid #b9b9b9;border-right-color:#f8f8f8;border-bottom-color:#f8f8f8"></div>
<span class="t" style="top:543.5px;right:91px;transform:scaleX(0.848);transform-origin:100% 0;">$1,312.64</span>
<div class="a" style="left:7px;top:576px;width:735px;height:45px;border:1px solid #d0d0d0;border-radius:4px;box-shadow:inset 1px 1px 0 #fafafa, 1px 1px 0 #fafafa"></div>
<div class="a" style="left:12px;top:570px;width:24.5px;height:14px;background:#ebeaeb"></div>
<span class="t" style="top:569.5px;left:13px;transform:scaleX(0.764);transform-origin:0 0;">Costs</span>
<div class="a" style="left:16px;top:596px;width:84px;height:19px;background:#fefefe;border:1px solid #dadada;border-radius:3px"></div>
<span class="t" style="top:597.5px;left:24px;transform:scaleX(0.828);transform-origin:0 0;color:#222;font-weight:bold;">DAT RateView™</span>
<div class="a" style="left:103px;top:596px;width:84px;height:19px;background:#eeeeee;border:1px solid #dadada;border-radius:3px"></div>
<svg class="a" style="left:125px;top:600px" width="13" height="12" viewBox="0 0 13 12"><rect x="0.6" y="0.6" width="11.8" height="10.6" fill="#f6f6f6" stroke="#aaa" stroke-width="1"/><rect x="1.2" y="1.2" width="10.6" height="2.6" fill="#b8b8b8"/><path d="M2.4 5.6 H4.4 M5.6 5.6 H7.6 M8.8 5.6 H10.8 M2.4 7.6 H4.4 M5.6 7.6 H7.6 M8.8 7.6 H10.8 M2.4 9.6 H4.4 M5.6 9.6 H7.6 M8.8 9.6 H10.8" stroke="#9a9a9a" stroke-width="1.1"/></svg>
<span class="t" style="top:597.5px;left:142px;transform:scaleX(0.817);transform-origin:0 0;color:#aaa;"><u>R</u>ates</span>
<span class="t" style="top:597.5px;left:218.5px;transform:scaleX(0.818);transform-origin:0 0;"><u>Q</u>uote</span>
<span class="t" style="top:583.5px;left:250.5px;transform:scaleX(0.817);transform-origin:0 0;">Rate</span>
<div class="a" style="left:249px;top:596px;width:44px;height:18px;background:#fff;border:1px solid #b2b2b2;border-top-color:#9c9c9c;border-left-color:#a6a6a6;border-bottom-color:#cdcdcd;border-right-color:#c6c6c6"></div>
<span class="t" style="top:597.5px;right:460px;transform:scaleX(0.817);transform-origin:100% 0;color:#8a8a8a;">0.00</span>
<span class="t" style="top:583.5px;left:297px;transform:scaleX(0.817);transform-origin:0 0;">Method</span>
<div class="a" style="left:295px;top:596px;width:55px;height:18px;background:#fff;border:1px solid #b6b6b6;border-top-color:#a4a4a4;border-left-color:#acacac;border-bottom-color:#cdcdcd;border-right-color:#c6c6c6;border-radius:2px"></div>
<div class="a" style="left:335px;top:598px;width:13px;height:14px;border:1px solid #b9bccb;border-radius:2px;background:linear-gradient(#f2f3f8,#d4d6e2)"></div>
<svg class="a" style="left:338px;top:602px" width="7" height="5" viewBox="0 0 7 5"><path d="M0.5 0.8 H6.5 L3.5 4.4 Z" fill="#c2c4d4"/></svg>
<span class="t" style="top:597.5px;left:298px;transform:scaleX(0.818);transform-origin:0 0;color:#8a8a8a;">Flat</span>
<span class="t" style="top:597.5px;left:357px;transform:scaleX(0.854);transform-origin:0 0;">=</span>
<div class="a" style="left:368px;top:598px;width:58px;height:15px;background:#e9e9e9;border:1px solid #b9b9b9;border-right-color:#f8f8f8;border-bottom-color:#f8f8f8"></div>
<div class="a" style="left:442px;top:596px;width:84px;height:19px;background:#fefefe;border:1px solid #dadada;border-radius:3px"></div>
<svg class="a" style="left:448px;top:597px" width="20" height="16" viewBox="0 0 20 16"><path d="M1.2 1.6 L4.2 2.2 L7.6 5.6 L10.6 3.2 L14.2 2.4 L17.4 4 L19 7.6 L18 11.4 L14.6 13 L12.2 12.6 L10.4 15 L7.4 15 L5.6 12.4 L3.6 8 Z" fill="#a2a2a2"/><path d="M15.4 3.4 C18.6 5 18.8 10 16 12.2" stroke="#4e4e4e" stroke-width="1.5" fill="none"/><path d="M2 2 L7.6 9.6 M7.6 5.8 L12.4 10.4 L10.6 14.4 M10.6 3.4 L13.4 8.4" stroke="#6a6a6a" stroke-width="1" fill="none"/><path d="M5 6.5 L8.6 12.4" stroke="#d4d4d4" stroke-width="0.9"/></svg>
<span class="t" style="top:597.5px;left:470.5px;transform:scaleX(0.801);transform-origin:0 0;color:#666;"><u>A</u>djustments</span>
<span class="t" style="top:597.5px;left:549.5px;transform:scaleX(0.808);transform-origin:0 0;">Total Costs</span>
<div class="a" style="left:598px;top:598px;width:64px;height:15px;background:#e9e9e9;border:1px solid #b9b9b9;border-right-color:#f8f8f8;border-bottom-color:#f8f8f8"></div>
<span class="t" style="top:598.0px;right:91px;transform:scaleX(0.835);transform-origin:100% 0;">$0.00</span>
<div class="a" style="left:7px;top:630px;width:735px;height:34px;border:1px solid #d0d0d0;border-radius:4px;box-shadow:inset 1px 1px 0 #fafafa, 1px 1px 0 #fafafa"></div>
<div class="a" style="left:12px;top:624px;width:28px;height:14px;background:#ebeaeb"></div>
<span class="t" style="top:623.5px;left:13px;transform:scaleX(0.743);transform-origin:0 0;">Carrier</span>
<div class="a" style="left:16px;top:639px;width:84px;height:19px;background:#fefefe;border:1px solid #dadada;border-radius:3px"></div>
<svg class="a" style="left:26px;top:643px" width="18" height="13" viewBox="0 0 18 13"><path d="M1 4.2 C1 1 4 0.6 8.6 0.6 C13.2 0.6 16.2 1 16.2 4.2 L16 5.4 L12.6 5.4 L12.2 3.8 L5 3.8 L4.6 5.4 L1.2 5.4 Z" fill="#d81414"/><path d="M4.4 5 H12.8 L15 11.6 H2.2 Z" fill="#d81414"/><circle cx="8.6" cy="8" r="2.1" fill="#fff"/><circle cx="8.6" cy="8" r="0.9" fill="#d81414"/><path d="M15.5 6 C17.5 7 17.5 10 15.8 11" stroke="#b01010" stroke-width="0.9" fill="none"/></svg>
<span class="t" style="top:640.5px;left:52.5px;transform:scaleX(0.818);transform-origin:0 0;color:#666;">Chec<u>k</u> Call</span>
<span class="t" style="top:640.7px;left:106.5px;transform:scaleX(0.932);transform-origin:0 0;font-weight:bold;font-size:13px;">Load 32512&nbsp; Segment 1</span>
<span class="t" style="top:641.0px;left:267.5px;transform:scaleX(0.84);transform-origin:0 0;">Abbr. ALTLEKS</span>
<span class="t" style="top:641.0px;left:344px;transform:scaleX(0.821);transform-origin:0 0;">Alternative Transportation Inc</span>
<span class="t" style="top:641.0px;left:474.5px;transform:scaleX(0.795);transform-origin:0 0;">Contact Bill Smith</span>
<span class="t" style="top:641.0px;left:556.5px;transform:scaleX(0.804);transform-origin:0 0;">(913)455-7475</span>
<div class="a" style="left:0px;top:668px;width:750px;height:3px;background:#4e4e4e"></div>
<div class="a" style="left:2px;top:667px;width:744px;height:1px;background:#8a8a8a"></div>
</body></html>
